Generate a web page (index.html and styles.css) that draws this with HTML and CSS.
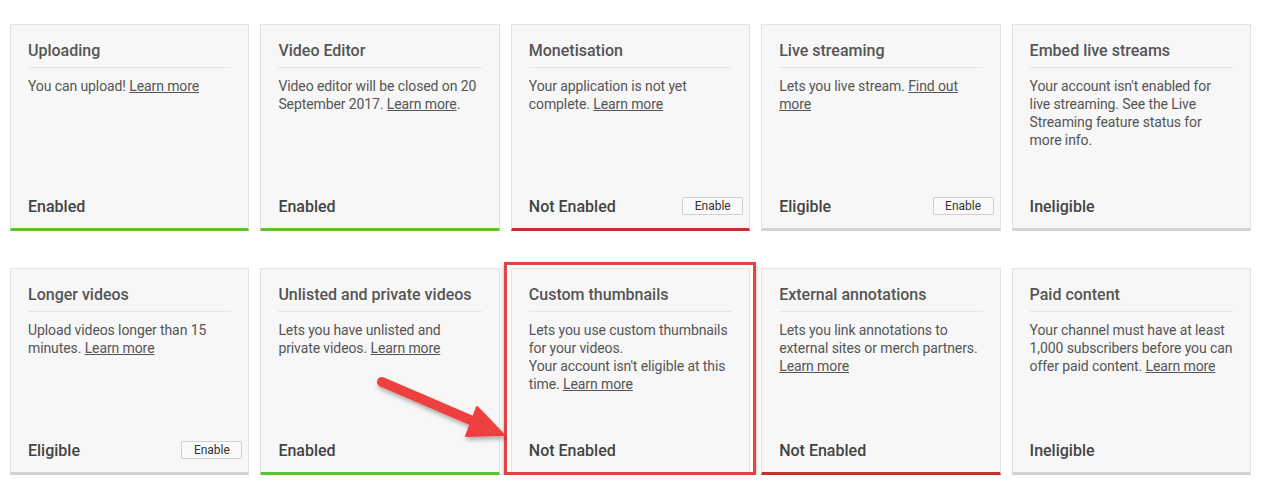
FILE: index.html
```html
<!DOCTYPE html>
<html lang="en">
<head>
  <meta charset="UTF-8" />
  <title>Channel status and features</title>
  <link rel="stylesheet" href="styles.css">
</head>
<body>
  <div class="features">
    <div class="card ok">
      <h3>Uploading</h3>
      <p class="desc">You can upload! <a href="#">Learn more</a></p>
      <div class="status">Enabled</div>
    </div>
    <div class="card ok">
      <h3>Video Editor</h3>
      <p class="desc">Video editor will be closed on 20 September 2017. <a href="#">Learn more</a>.</p>
      <div class="status">Enabled</div>
    </div>
    <div class="card off">
      <h3>Monetisation</h3>
      <p class="desc">Your application is not yet complete. <a href="#">Learn more</a></p>
      <div class="status">Not Enabled <button>Enable</button></div>
    </div>
    <div class="card idle">
      <h3>Live streaming</h3>
      <p class="desc">Lets you live stream. <a href="#">Find out more</a></p>
      <div class="status">Eligible <button>Enable</button></div>
    </div>
    <div class="card idle">
      <h3>Embed live streams</h3>
      <p class="desc">Your account isn't enabled for live streaming. See the Live Streaming feature status for more info.</p>
      <div class="status">Ineligible</div>
    </div>

    <div class="card idle">
      <h3>Longer videos</h3>
      <p class="desc">Upload videos longer than 15 minutes. <a href="#">Learn more</a></p>
      <div class="status">Eligible <button>Enable</button></div>
    </div>
    <div class="card ok">
      <h3>Unlisted and private videos</h3>
      <p class="desc">Lets you have unlisted and private videos. <a href="#">Learn more</a></p>
      <div class="status">Enabled</div>
    </div>
    <div class="card idle marked">
      <h3>Custom thumbnails</h3>
      <p class="desc">Lets you use custom thumbnails for your videos.<br>Your account isn't eligible at this time. <a href="#">Learn more</a></p>
      <div class="status">Not Enabled</div>
      <div class="highlight"></div>
      <svg class="arrow" width="150" height="80" viewBox="0 0 150 80">
        <defs>
          <filter id="shade" x="-20%" y="-20%" width="140%" height="160%">
            <feDropShadow dx="1" dy="3" stdDeviation="2" flood-color="#000" flood-opacity="0.3"/>
          </filter>
        </defs>
        <g filter="url(#shade)" fill="#ef3f3f" stroke="#ef3f3f">
          <line x1="15" y1="12" x2="108" y2="52" stroke-width="10" stroke-linecap="round"/>
          <polygon points="110,37 99,66 137,65" stroke-width="2" stroke-linejoin="round"/>
        </g>
      </svg>
    </div>
    <div class="card off">
      <h3>External annotations</h3>
      <p class="desc">Lets you link annotations to external sites or merch partners. <a href="#">Learn more</a></p>
      <div class="status">Not Enabled</div>
    </div>
    <div class="card idle">
      <h3>Paid content</h3>
      <p class="desc">Your channel must have at least 1,000 subscribers before you can offer paid content. <a href="#">Learn more</a></p>
      <div class="status">Ineligible</div>
    </div>
  </div>
</body>
</html>
```

FILE: styles.css
```css
body {
  margin: 0;
  background: #fff;
  font-family: Roboto, "Liberation Sans", Arial, sans-serif;
  color: #555;
}
.features {
  display: grid;
  grid-template-columns: repeat(5, 1fr);
  column-gap: 11px;
  row-gap: 37px;
  padding: 24px 10px 0;
}
.card {
  position: relative;
  height: 207px;
  box-sizing: border-box;
  display: flex;
  flex-direction: column;
  padding: 16px 16px 12px 17px;
  background: #f7f7f7;
  border: 1px solid #e3e3e3;
  border-bottom: 3px solid #d2d2d2;
}
.card.ok {
  border-bottom-color: #5bc52d;
}
.card.off {
  border-bottom-color: #c5322b;
}
.card h3 {
  margin: 0 1px 0 0;
  padding-bottom: 6px;
  border-bottom: 1px solid #e6e6e6;
  font-size: 16px;
  line-height: 20px;
  font-weight: 500;
  color: #555;
  white-space: nowrap;
}
.desc {
  flex: 1;
  margin: 9px 0 0;
  font-size: 14px;
  line-height: 18px;
  letter-spacing: -0.1px;
  color: #555;
}
.desc a {
  color: #555;
  text-decoration: underline;
}
.status {
  display: flex;
  align-items: center;
  justify-content: space-between;
  height: 20px;
  font-size: 16px;
  font-weight: 500;
  color: #444;
}
.status button {
  margin-right: -10px;
  width: 61px;
  height: 18px;
  padding: 0;
  background: #fafafa;
  border: 1px solid #d0d0d0;
  border-radius: 2px;
  font-family: inherit;
  font-size: 12px;
  color: #333;
  cursor: pointer;
}
.highlight {
  position: absolute;
  left: -8px;
  right: -7px;
  top: -7px;
  bottom: -3px;
  border: 3px solid #e04545;
  box-shadow: 0 2px 4px rgba(0, 0, 0, 0.35);
  pointer-events: none;
}
.arrow {
  position: absolute;
  left: -145px;
  top: 101px;
  pointer-events: none;
}
```
